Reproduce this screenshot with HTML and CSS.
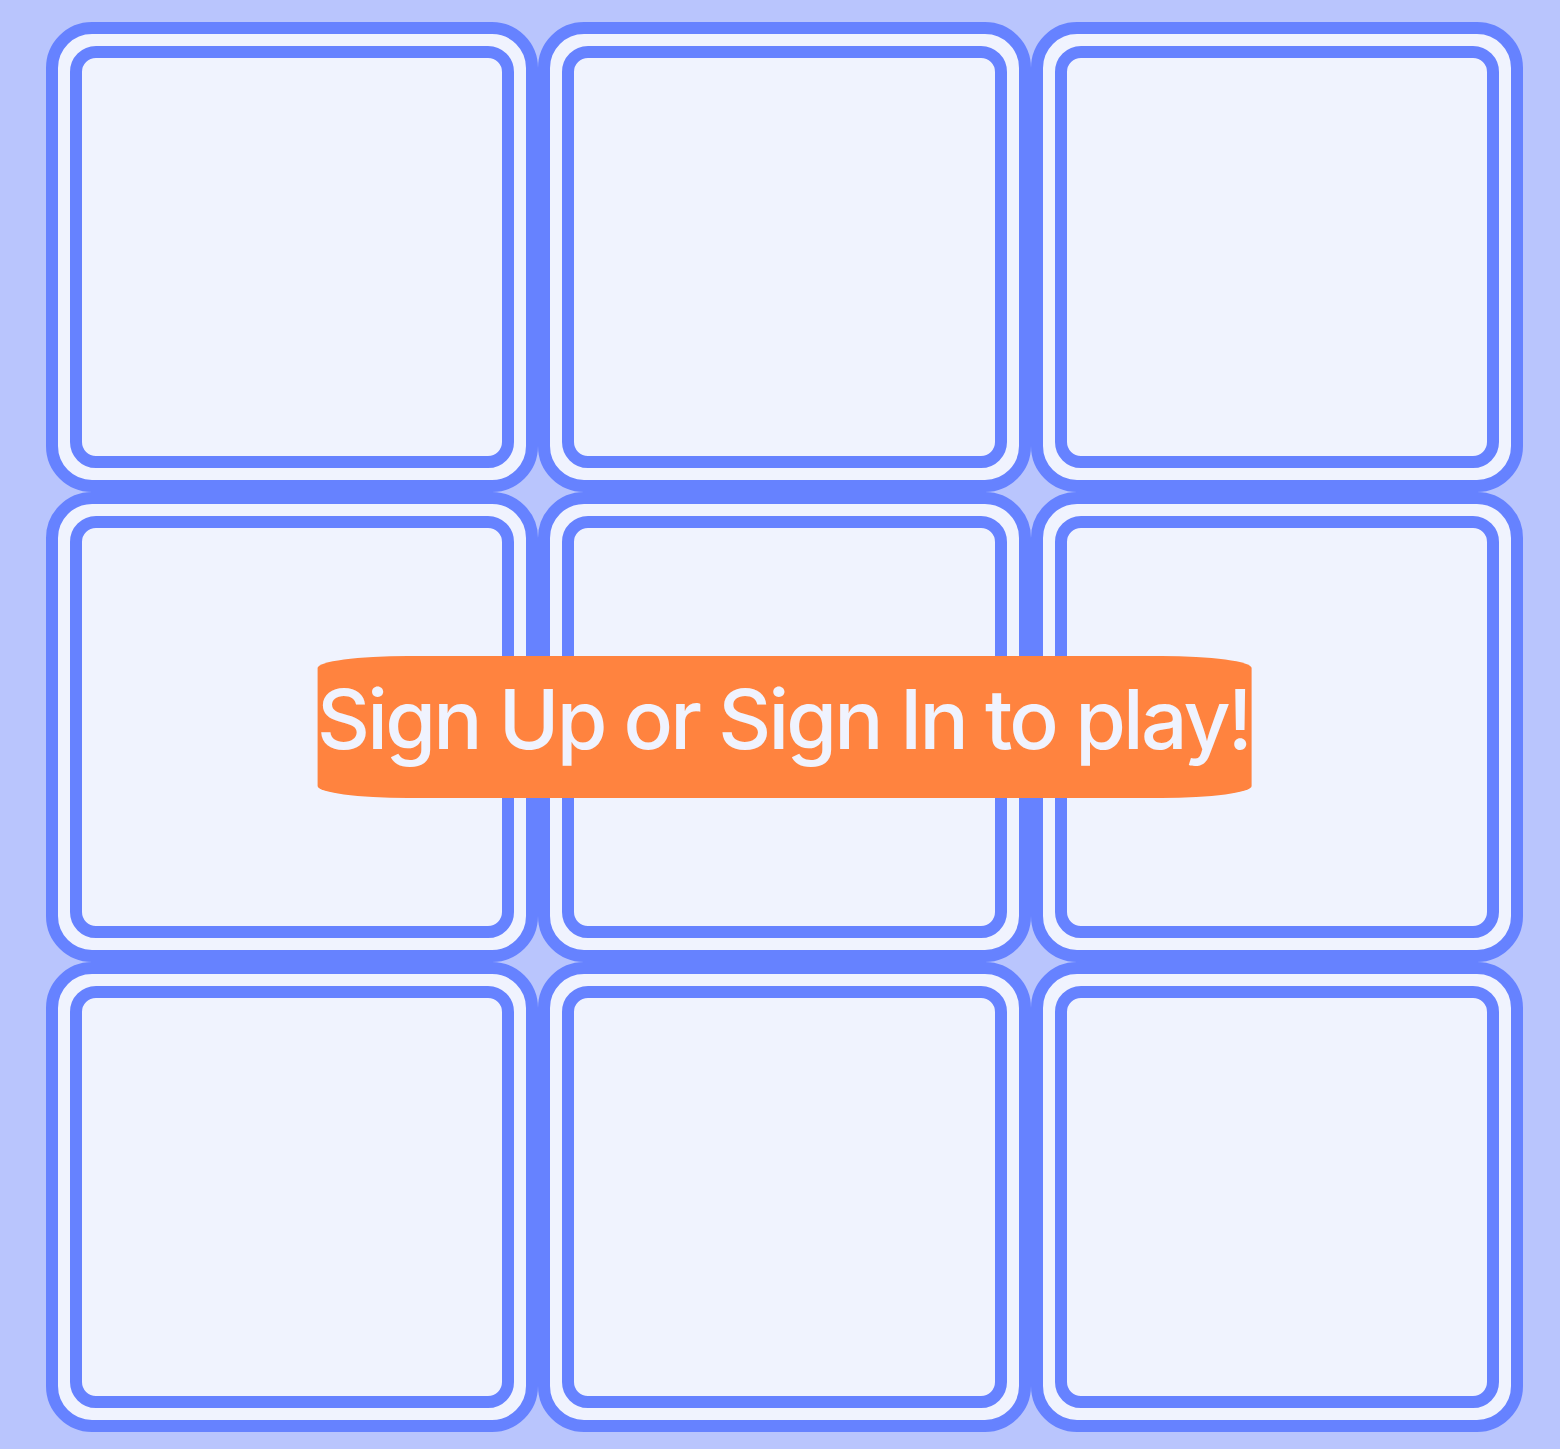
FILE: index.html
```html
<!DOCTYPE html>
<html>
<head>
<meta charset="utf-8">
<link rel="stylesheet" href="styles.css">
</head>
<body>
<main class="page">
  <div class="board">
    <div class="cell"><div class="slot"></div></div>
    <div class="cell"><div class="slot"></div></div>
    <div class="cell"><div class="slot"></div></div>
    <div class="cell"><div class="slot"></div></div>
    <div class="cell"><div class="slot"></div></div>
    <div class="cell"><div class="slot"></div></div>
    <div class="cell"><div class="slot"></div></div>
    <div class="cell"><div class="slot"></div></div>
    <div class="cell"><div class="slot"></div></div>
    <div class="banner">Sign Up or Sign In to play!</div>
  </div>
</main>
</body>
</html>
```
FILE: styles.css
```css
html, body {
  margin: 0;
  padding: 0;
  background: #b9c5fd;
}
.page {
  padding: 22px 37px 17px 46px;
}
.board {
  position: relative;
  width: 1477px;
  height: 1410px;
  display: grid;
  grid-template-columns: repeat(3, 1fr);
  grid-template-rows: repeat(3, 1fr);
}
.cell {
  box-sizing: border-box;
  border: 12px solid #6682ff;
  border-radius: 46px;
  padding: 12px;
  background: #f0f3fe;
}
.slot {
  box-sizing: border-box;
  height: 100%;
  border: 12px solid #6682ff;
  border-radius: 26px;
  background: #f0f3fe;
}
.banner {
  position: absolute;
  left: 50%;
  top: 50%;
  transform: translate(-50%, -50%);
  white-space: nowrap;
  background: #ff833f;
  color: #f0f3fe;
  font-family: Inter, "Liberation Sans", sans-serif;
  font-weight: 500;
  font-size: 82px;
  letter-spacing: -2.8px;
  line-height: 128px;
  padding: 0 2px 14px 0;
  border-radius: 90px / 12px;
}
```
